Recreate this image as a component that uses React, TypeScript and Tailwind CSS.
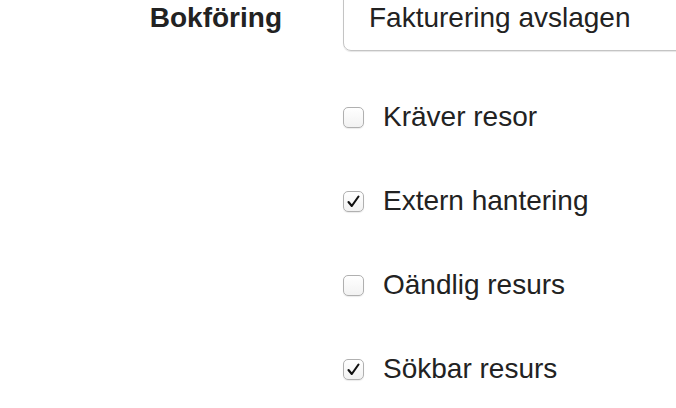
import React from "react";

function Box({ checked }: { checked: boolean }) {
  return (
    <div className="w-[21px] h-[21px] rounded-[5px] border border-[#b0b0b0] bg-gradient-to-b from-white to-[#f2f2f2] shadow-[0_1px_1px_rgba(0,0,0,0.08)] flex items-center justify-center shrink-0">
      {checked && (
        <svg width="15" height="15" viewBox="0 0 15 15" fill="none">
          <path d="M2.5 8 L5.8 12 L12.5 2.5" stroke="#111" strokeWidth="2.1" strokeLinecap="round" strokeLinejoin="round" />
        </svg>
      )}
    </div>
  );
}

const items = [
  { label: "Kräver resor", checked: false },
  { label: "Extern hantering", checked: true },
  { label: "Oändlig resurs", checked: false },
  { label: "Sökbar resurs", checked: true },
];

export default function App() {
  return (
    <div className="w-[676px] h-[408px] overflow-hidden bg-white text-[#222] font-['Liberation_Sans',Arial,sans-serif]">
      <div className="flex items-center mt-[-17px]">
        <div className="w-[282px] shrink-0 text-right font-bold text-[28px] leading-none pt-[2px]">Bokföring</div>
        <div className="ml-[61px] w-[400px] shrink-0 h-[68px] border border-[#c4c4c4] rounded-[8px] shadow-[0_1px_1px_rgba(0,0,0,0.1)] pl-[25px] pt-[2px] flex items-center text-[28px] leading-none">
          Fakturering avslagen
        </div>
      </div>
      <div className="mt-[24px] flex flex-col">
        {items.map((it) => (
          <div key={it.label} className="h-[84px] flex items-center pl-[343px] gap-[19px]">
            <Box checked={it.checked} />
            <span className="text-[28px] leading-none">{it.label}</span>
          </div>
        ))}
      </div>
    </div>
  );
}
